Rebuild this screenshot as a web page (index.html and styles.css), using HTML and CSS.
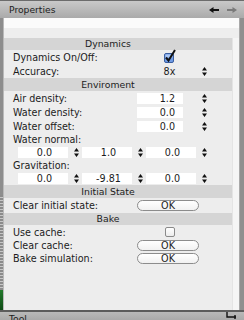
FILE: index.html
```html
<html>
    <head>
        <meta charset="UTF-8">
        <title>Properties</title>
        <link rel="stylesheet" href="styles.css">
    </head>
    <body>
        <div class="window">
            <div class="titlebar">
                <span class="title">Properties</span>
                <span class="nav">
                    <svg width="10" height="6" viewBox="0 0 10 6"><path d="M0 3 L4.5 0 V2 H10 V4 H4.5 V6 Z" fill="#111"/></svg>
                    <svg width="10" height="6" viewBox="0 0 10 6"><path d="M10 3 L5.5 0 V2 H0 V4 H5.5 V6 Z" fill="#7a7a7a"/></svg>
                </span>
            </div>

            <div class="frame">
                <div class="edge"></div>
                <div class="inner">
                    <div class="strip-white"></div>
                    <div class="strip-gray"></div>
                    <div class="content">
                        <div class="panel">
                            <div class="section s12">Dynamics</div>
                            <div class="row">
                                <span class="label">Dynamics On/Off:</span>
                                <span class="ctl center">
                                    <svg class="check" width="13" height="14" viewBox="0 0 13 14">
                                        <rect x="1.5" y="4.5" width="9" height="9" rx="1.5" fill="#6f9be4" stroke="#3a5d9e"/>
                                        <rect x="2.5" y="5.5" width="7" height="3" fill="#a9c6f3"/>
                                        <path d="M3 8.5 L5.5 11.5 L12 1" fill="none" stroke="#111" stroke-width="2"/>
                                    </svg>
                                </span>
                            </div>
                            <div class="row">
                                <span class="label">Accuracy:</span>
                                <span class="ctl center">8x</span>
                                <svg class="step" width="5" height="9" viewBox="0 0 5 9"><path d="M2.5 0 L5 3.5 H0 Z M0 5.5 H5 L2.5 9 Z" fill="#111"/></svg>
                            </div>

                            <div class="section s13">Enviroment</div>
                            <div class="row">
                                <span class="label">Air density:</span>
                                <span class="ctl"><span class="num">1.2</span></span>
                                <svg class="step" width="5" height="9" viewBox="0 0 5 9"><path d="M2.5 0 L5 3.5 H0 Z M0 5.5 H5 L2.5 9 Z" fill="#111"/></svg>
                            </div>
                            <div class="row">
                                <span class="label">Water density:</span>
                                <span class="ctl"><span class="num">0.0</span></span>
                                <svg class="step" width="5" height="9" viewBox="0 0 5 9"><path d="M2.5 0 L5 3.5 H0 Z M0 5.5 H5 L2.5 9 Z" fill="#111"/></svg>
                            </div>
                            <div class="row">
                                <span class="label">Water offset:</span>
                                <span class="ctl"><span class="num">0.0</span></span>
                                <svg class="step" width="5" height="9" viewBox="0 0 5 9"><path d="M2.5 0 L5 3.5 H0 Z M0 5.5 H5 L2.5 9 Z" fill="#111"/></svg>
                            </div>
                            <div class="row h12">
                                <span class="label">Water normal:</span>
                            </div>
                            <div class="triple">
                                <span class="cell"><span class="num wide">0.0</span><svg class="step" width="5" height="9" viewBox="0 0 5 9"><path d="M2.5 0 L5 3.5 H0 Z M0 5.5 H5 L2.5 9 Z" fill="#111"/></svg></span>
                                <span class="cell"><span class="num wide">1.0</span><svg class="step" width="5" height="9" viewBox="0 0 5 9"><path d="M2.5 0 L5 3.5 H0 Z M0 5.5 H5 L2.5 9 Z" fill="#111"/></svg></span>
                                <span class="cell"><span class="num wide">0.0</span><svg class="step" width="5" height="9" viewBox="0 0 5 9"><path d="M2.5 0 L5 3.5 H0 Z M0 5.5 H5 L2.5 9 Z" fill="#111"/></svg></span>
                            </div>
                            <div class="row h13">
                                <span class="label">Gravitation:</span>
                            </div>
                            <div class="triple h13">
                                <span class="cell"><span class="num wide">0.0</span><svg class="step" width="5" height="9" viewBox="0 0 5 9"><path d="M2.5 0 L5 3.5 H0 Z M0 5.5 H5 L2.5 9 Z" fill="#111"/></svg></span>
                                <span class="cell"><span class="num wide">-9.81</span><svg class="step" width="5" height="9" viewBox="0 0 5 9"><path d="M2.5 0 L5 3.5 H0 Z M0 5.5 H5 L2.5 9 Z" fill="#111"/></svg></span>
                                <span class="cell"><span class="num wide">0.0</span><svg class="step" width="5" height="9" viewBox="0 0 5 9"><path d="M2.5 0 L5 3.5 H0 Z M0 5.5 H5 L2.5 9 Z" fill="#111"/></svg></span>
                            </div>

                            <div class="section s13">Initial State</div>
                            <div class="row h15">
                                <span class="label">Clear initial state:</span>
                                <span class="ctl"><span class="btn">OK</span></span>
                            </div>

                            <div class="section s12">Bake</div>
                            <div class="row">
                                <span class="label">Use cache:</span>
                                <span class="ctl center"><span class="box"></span></span>
                            </div>
                            <div class="row h13">
                                <span class="label">Clear cache:</span>
                                <span class="ctl"><span class="btn">OK</span></span>
                            </div>
                            <div class="row h13">
                                <span class="label">Bake simulation:</span>
                                <span class="ctl"><span class="btn">OK</span></span>
                            </div>
                        </div>
                        <div class="track"></div>
                    </div>
                </div>
                <div class="rim"></div>
            </div>

            <div class="bottombar">
                <span class="title">Tool</span>
                <svg width="11" height="7" viewBox="0 0 11 7"><path d="M1 0 V5 H10 M9 3 V7" fill="none" stroke="#111" stroke-width="1.4"/></svg>
            </div>
        </div>
    </body>
</html>
```

FILE: styles.css
```css
html, body {
    margin: 0;
    height: 100%;
    overflow: hidden;
}

body {
    font-family: "DejaVu Sans", sans-serif;
    font-size: 9.6px;
    color: #1c1c1c;
    background-color: #8e8e8e;
}

.window {
    width: 244px;
    height: 320px;
    display: flex;
    flex-direction: column;
}

.titlebar {
    height: 17px;
    border-top: 1px solid #6c6c6c;
    background: linear-gradient(#c9c9c9, #aaaaaa);
    display: flex;
    align-items: center;
    justify-content: space-between;
    padding: 0 7px 0 9px;
    font-size: 9.2px;
}

.nav {
    display: flex;
    gap: 8px;
    padding-top: 1px;
}

.frame {
    flex: 1;
    display: flex;
    min-height: 0;
}

.edge {
    width: 3px;
    border-right: 1px solid #b9b9b9;
    background:
        linear-gradient(#237a2c, #0e4a16) 0 272px / 3px 20px no-repeat,
        repeating-linear-gradient(#8b8b8b 0 2px, #c6c6c6 2px 3px) 0 177px / 3px 95px no-repeat,
        #8d8d8d;
}

.inner {
    flex: 1;
    display: flex;
    flex-direction: column;
}

.strip-white {
    height: 10px;
    background-color: #fbfbfb;
}

.strip-gray {
    height: 10px;
    background-color: #eeeeee;
}

.content {
    flex: 1;
    display: flex;
    background-color: #ededed;
}

.panel {
    width: 228px;
}

.track {
    flex: 1;
    background-color: #f5f5f5;
    border-left: 1px solid #e4e4e4;
}

.rim {
    width: 5px;
    background-color: #8f8f8f;
    border-left: 1px solid #a9a9a9;
    box-sizing: border-box;
}

.section {
    background-color: #d5d5d5;
    text-align: center;
    padding-right: 20px;
    font-size: 9.3px;
}

.s12 { height: 12px; line-height: 12px; }
.s13 { height: 13px; line-height: 13px; }

.row {
    display: flex;
    align-items: center;
    height: 14px;
}

.row.h12 { height: 12px; }
.row.h13 { height: 13px; }
.row.h15 { height: 15px; }

.label {
    box-sizing: border-box;
    width: 133px;
    padding-left: 9px;
    white-space: nowrap;
}

.ctl {
    width: 62px;
    display: flex;
    align-items: center;
}

.ctl.center {
    justify-content: center;
    padding-left: 3px;
    box-sizing: border-box;
}

.step {
    margin-left: 3px;
    display: block;
}

.num {
    display: block;
    box-sizing: border-box;
    width: 46px;
    height: 11px;
    line-height: 11px;
    background-color: #ffffff;
    text-align: right;
    padding-right: 8px;
}

.triple {
    display: flex;
    align-items: center;
    height: 14px;
    padding-left: 14px;
    gap: 3px;
}

.triple.h13 { height: 13px; }

.cell {
    display: flex;
    align-items: center;
    gap: 6px;
}

.cell .step { margin-left: 0; }

.num.wide {
    width: 50px;
    text-align: center;
    padding: 0 0 0 3px;
}

.check {
    display: block;
    margin-top: -3px;
}

.box {
    display: block;
    width: 8px;
    height: 8px;
    border: 1px solid #8a8a8a;
    border-radius: 2px;
    background: linear-gradient(#ffffff, #ececec);
}

.btn {
    display: block;
    box-sizing: border-box;
    width: 62px;
    height: 11px;
    line-height: 9px;
    border: 1px solid #8c8c8c;
    border-radius: 6px;
    background: linear-gradient(#ffffff, #f1f1f1);
    text-align: center;
}

.bottombar {
    height: 8px;
    border-top: 2px solid #5c5c5c;
    background: linear-gradient(#b9b9b9, #aaaaaa);
    display: flex;
    justify-content: space-between;
    padding: 0 7px 0 9px;
    overflow: hidden;
}

.bottombar .title {
    line-height: 14px;
    font-size: 9.2px;
}

.bottombar svg {
    margin-top: 0;
}
```
